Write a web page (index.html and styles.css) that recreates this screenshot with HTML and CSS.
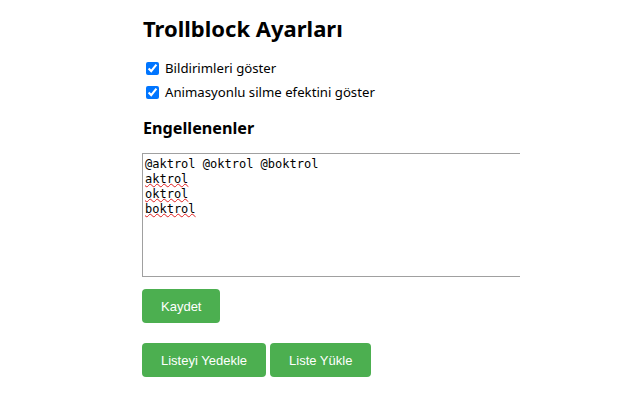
FILE: index.html
```html
<!DOCTYPE html>
<html lang="tr">
<head>
<meta charset="utf-8">
<link rel="stylesheet" href="styles.css">
</head>
<body>
<main class="page">
  <h1 class="title">Trollblock Ayarları</h1>
  <label class="opt"><input type="checkbox" checked> Bildirimleri göster</label>
  <label class="opt"><input type="checkbox" checked> Animasyonlu silme efektini göster</label>
  <h2 class="subtitle">Engellenenler</h2>
  <div class="list" contenteditable="true" spellcheck="false">@aktrol @oktrol @boktrol<br><span class="typo">aktrol</span><br><span class="typo">oktrol</span><br><span class="typo">boktrol</span></div>
  <div class="row"><button class="btn">Kaydet</button></div>
  <div class="row"><button class="btn">Listeyi Yedekle</button><button class="btn">Liste Yükle</button></div>
</main>
</body>
</html>
```
FILE: styles.css
```css
html, body { margin: 0; padding: 0; background: #fff; }
body { font-family: "Noto Sans", "Open Sans", sans-serif; color: #000; }
.page { padding: 12px 0 0 142px; display: flex; flex-direction: column; align-items: flex-start; }
.title { font-size: 22px; font-weight: 700; margin: 0 0 13px 1px; line-height: 32px; }
.opt { display: flex; align-items: center; font-size: 13.2px; line-height: 23.5px; }
.opt input { margin: 0 6px 0 4px; width: 13px; height: 13px; accent-color: #0075ff; }
.subtitle { font-size: 16.2px; font-weight: 700; margin: 12px 0 13px 1px; line-height: 24px; }
.list { box-sizing: border-box; width: 378px; height: 124px; border: 1px solid #a0a0a0; border-right: none; padding: 3px 2px; font-family: "DejaVu Sans Mono", monospace; font-size: 12px; line-height: 15px; outline: none; }
.typo { text-decoration: underline wavy #e02020; text-decoration-thickness: 1px; text-underline-offset: 0px; text-decoration-skip-ink: none; }
.row { display: flex; gap: 4px; margin-top: 12px; }
.row + .row { margin-top: 20px; }
.btn { background: #4caf50; color: #fff; border: none; border-radius: 4px; font-family: "Liberation Sans", Arial, sans-serif; font-size: 13px; height: 34px; padding: 0 19px; cursor: pointer; }
```
